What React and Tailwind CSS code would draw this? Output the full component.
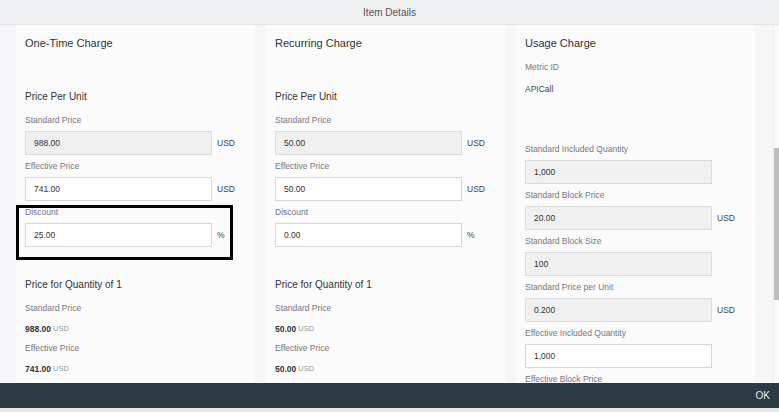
import React from "react";

const font = { fontFamily: '"Liberation Sans", Arial, sans-serif' };

function Label({ children, h = "h-[22px]" }) {
  return (
    <div className={`${h} flex items-center text-[8.5px] text-[#777]`}>{children}</div>
  );
}

function Field({ label, value, unit, gray }) {
  return (
    <div>
      <Label>{label}</Label>
      <div className="h-[24px] flex items-center">
        <div
          className={`w-[187px] h-[24px] flex items-center pl-[8px] text-[8.5px] text-[#333] border ${
            gray ? "bg-[#f0f0f0] border-[#dcdcdc]" : "bg-white border-[#d6d6d6]"
          }`}
        >
          {value}
        </div>
        {unit && <span className="ml-[5px] text-[8.5px] text-[#444]">{unit}</span>}
      </div>
    </div>
  );
}

function Heading({ children }) {
  return <div className="h-[24px] flex items-center text-[11px] text-[#333]">{children}</div>;
}

function SubHeading({ children }) {
  return <div className="h-[22px] flex items-center text-[10px] text-[#333]">{children}</div>;
}

function PriceValue({ value, h }) {
  return (
    <div className={`${h} flex items-center gap-[2px]`}>
      <span className="text-[8.5px] font-bold text-[#333]">{value}</span>
      <span className="text-[7.5px] text-[#999]">USD</span>
    </div>
  );
}

function ChargeColumn({ title, std, eff, disc, boxed }) {
  return (
    <div className="w-[239px] shrink-0 px-[9px] pt-[6px] bg-[#fbfbfc]">
      <Heading>{title}</Heading>
      <div className="h-[30px]" />
      <SubHeading>Price Per Unit</SubHeading>
      <div className="h-[2px]" />
      <Field label="Standard Price" value={std} unit="USD" gray />
      <Field label="Effective Price" value={eff} unit="USD" />
      <div className="relative">
        <Field label="Discount" value={disc} unit="%" />
        {boxed && (
          <div className="absolute left-[-9px] top-[4px] w-[217px] h-[55px] border-[3px] border-black" />
        )}
      </div>
      <div className="h-[26px]" />
      <SubHeading>Price for Quantity of 1</SubHeading>
      <div className="h-[2px]" />
      <Label>Standard Price</Label>
      <PriceValue value={std} h="h-[20px]" />
      <Label h="h-[19px]">Effective Price</Label>
      <PriceValue value={eff} h="h-[22px]" />
    </div>
  );
}

function UsageColumn() {
  return (
    <div className="w-[239px] shrink-0 px-[9px] pt-[6px] bg-[#fbfbfc]">
      <Heading>Usage Charge</Heading>
      <div className="h-[1px]" />
      <Label>Metric ID</Label>
      <div className="h-[22px] flex items-center text-[8.5px] text-[#444]">APICall</div>
      <div className="h-[38px]" />
      <Field label="Standard Included Quantity" value="1,000" gray />
      <Field label="Standard Block Price" value="20.00" unit="USD" gray />
      <Field label="Standard Block Size" value="100" gray />
      <Field label="Standard Price per Unit" value="0.200" unit="USD" gray />
      <Field label="Effective Included Quantity" value="1,000" />
      <Label>Effective Block Price</Label>
    </div>
  );
}

export default function App() {
  return (
    <div className="w-[779px] h-[412px] flex flex-col bg-[#f6f6f8] overflow-hidden" style={font}>
      <div className="h-[25px] shrink-0 flex items-center justify-center bg-[#eef0f2] border-b border-[#e4e6e8] text-[10px] text-[#555]">
        Item Details
      </div>
      <div className="flex-1 flex min-h-0">
        <div className="flex-1 overflow-hidden">
          <div className="flex gap-[11px] pl-[16px] h-full">
            <ChargeColumn title="One-Time Charge" std="988.00" eff="741.00" disc="25.00" boxed />
            <ChargeColumn title="Recurring Charge" std="50.00" eff="50.00" disc="0.00" />
            <UsageColumn />
          </div>
        </div>
        <div className="w-[6px] shrink-0 bg-[#f9f9f9] border-l border-[#ececec]">
          <div className="mt-[123px] h-[152px] bg-[#bdbdbd]" />
        </div>
      </div>
      <div className="h-[25px] shrink-0 flex items-center justify-end pr-[9px] bg-[#2c3a43] text-[10px] text-[#e8eaec]">
        OK
      </div>
      <div className="h-[4px] shrink-0 bg-[#e6e7e8]" />
    </div>
  );
}
